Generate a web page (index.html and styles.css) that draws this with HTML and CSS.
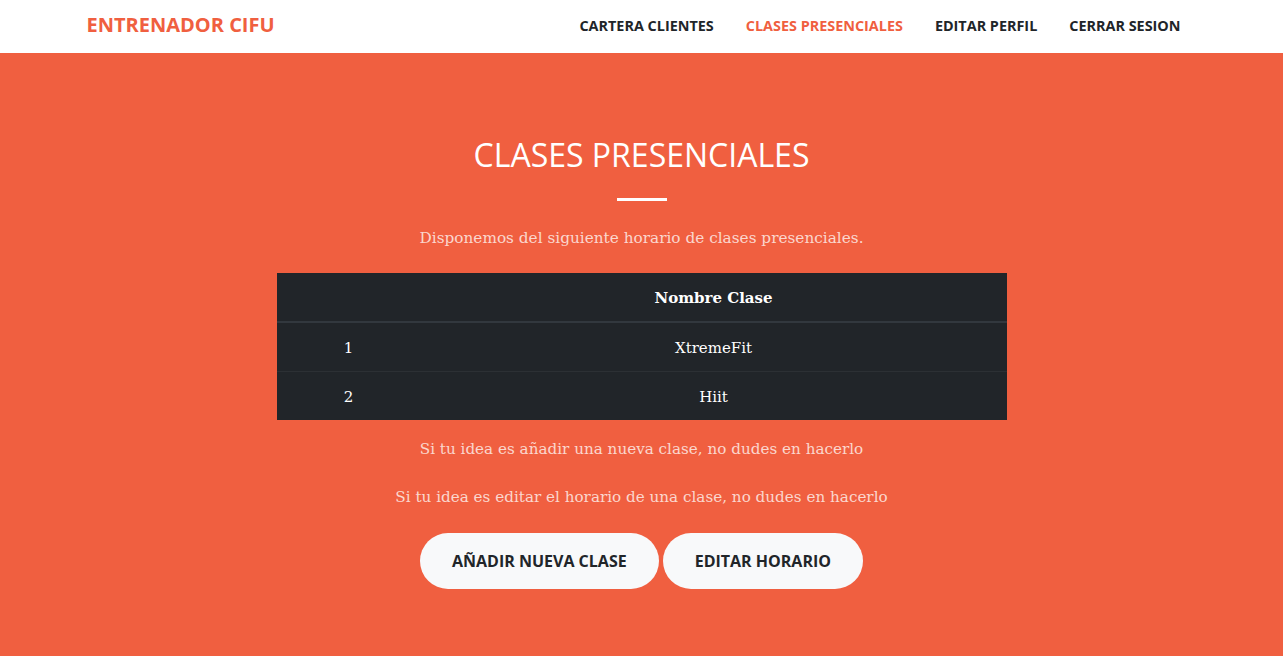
FILE: index.html
```html
<!DOCTYPE html>
<html lang="es">
<head>
<meta charset="utf-8">
<title>Clases presenciales</title>
<link rel="stylesheet" href="styles.css">
</head>
<body>
<nav class="navbar">
  <div class="container nav-inner">
    <a class="brand" href="#">Entrenador Cifu</a>
    <ul class="nav-links">
      <li><a href="#">Cartera Clientes</a></li>
      <li><a class="active" href="#">Clases Presenciales</a></li>
      <li><a href="#">Editar Perfil</a></li>
      <li><a href="#">Cerrar Sesion</a></li>
    </ul>
  </div>
</nav>
<section class="masthead">
  <div class="container content">
    <h2 class="title">Clases Presenciales</h2>
    <hr class="divider">
    <p class="lead">Disponemos del siguiente horario de clases presenciales.</p>
    <table class="table">
      <thead>
        <tr><th class="c1"></th><th class="c2">Nombre Clase</th></tr>
      </thead>
      <tbody>
        <tr><td class="c1">1</td><td class="c2">XtremeFit</td></tr>
        <tr><td class="c1">2</td><td class="c2">Hiit</td></tr>
      </tbody>
    </table>
    <p class="note">Si tu idea es añadir una nueva clase, no dudes en hacerlo</p>
    <p class="note">Si tu idea es editar el horario de una clase, no dudes en hacerlo</p>
    <div class="actions">
      <a class="btn" href="#">Añadir nueva clase</a>
      <a class="btn" href="#">Editar horario</a>
    </div>
  </div>
</section>
</body>
</html>
```

FILE: styles.css
```css
* { box-sizing: border-box; }
html, body { margin: 0; padding: 0; height: 100%; }
body {
  font-family: "DejaVu Serif", "Liberation Serif", serif;
  background: #f05f40;
  color: #212529;
}
.container {
  width: 1140px;
  margin: 0 auto;
  padding: 0 15px;
}
.navbar {
  background: #fff;
  height: 53px;
}
.nav-inner {
  display: flex;
  align-items: center;
  justify-content: space-between;
  height: 100%;
  padding-bottom: 1px;
}
.brand {
  font-family: "Open Sans", sans-serif;
  font-weight: 700;
  font-size: 20px;
  color: #f05f40;
  text-transform: uppercase;
  text-decoration: none;
  margin-bottom: 3px;
}
.nav-links {
  list-style: none;
  display: flex;
  margin: 0;
  padding: 0;
}
.nav-links a {
  display: block;
  font-family: "Open Sans", sans-serif;
  font-weight: 700;
  font-size: 14.4px;
  text-transform: uppercase;
  color: #212529;
  text-decoration: none;
  padding: 0 16px;
  line-height: 24px;
}
.nav-links a.active { color: #f05f40; }
.masthead {
  min-height: 603px;
}
.content {
  text-align: center;
  padding-top: 83px;
  display: flex;
  flex-direction: column;
  align-items: center;
}
.title {
  font-family: "Open Sans", sans-serif;
  font-weight: 400;
  font-size: 32px;
  line-height: 1.2;
  color: #fff;
  text-transform: uppercase;
  margin: 0;
}
.divider {
  width: 50px;
  border: 0;
  border-top: 3px solid #fff;
  margin: 24px 0 25px;
}
.lead, .note {
  font-size: 15.3px;
  line-height: 24px;
  color: rgba(255,255,255,.75);
  margin: 0 0 23px;
}
.table {
  width: 730px;
  border-collapse: separate;
  border-spacing: 0;
  background: #212529;
  color: #fff;
  font-size: 15px;
  margin-bottom: 17px;
}
.table th, .table td {
  padding: 12px;
  line-height: 24px;
  text-align: center;
}
.table th { font-weight: 700; border-bottom: 2px solid #32383e; padding: 13px 12px 11px; }
.table td { padding: 13px 12px 11px; }
.table tr + tr td { border-top: 1px solid #2c3034; }
.table .c1 { width: 144px; }
.note { margin-bottom: 24px; font-size: 15.2px; }
.actions {
  display: flex;
  gap: 4px;
  justify-content: center;
}
.btn {
  display: block;
  font-family: "Open Sans", sans-serif;
  font-weight: 700;
  font-size: 16px;
  line-height: 24px;
  text-transform: uppercase;
  color: #212529;
  background: #f8f9fa;
  text-decoration: none;
  padding: 16px 32px;
  border-radius: 300px;
}
```
